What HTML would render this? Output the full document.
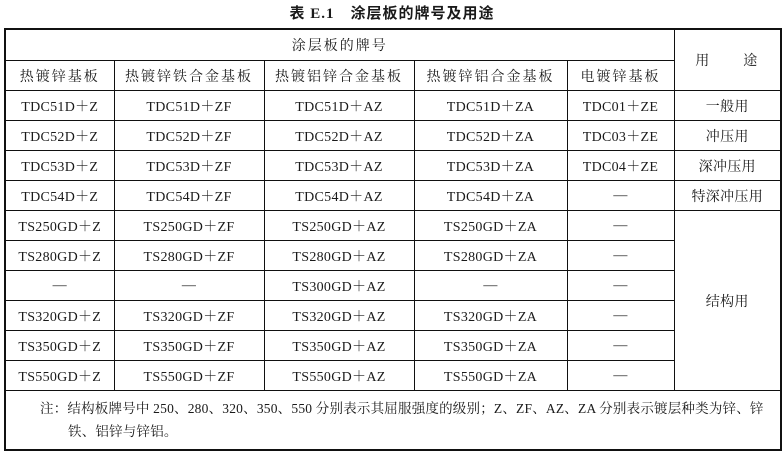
<!DOCTYPE html><html><head><meta charset="utf-8"><style>
body{margin:0;width:784px;height:456px;background:#fff;position:relative;overflow:hidden;font-family:"Liberation Serif","Noto Serif CJK SC",serif;color:#1a1a1a}
.t{position:absolute;top:2px;left:0;width:784px;text-align:center;font:bold 15px "Liberation Serif","Noto Sans CJK SC",sans-serif;letter-spacing:1px}
table{position:absolute;left:4px;top:28px;border-collapse:collapse;table-layout:fixed;width:776px;border:2px solid #111}
td{border:1px solid #111;text-align:center;font-size:14px;padding:0;height:29px;white-space:nowrap;letter-spacing:0.3px}
.h td{letter-spacing:2px}
.n{text-align:left;padding-left:34px;line-height:23px;font-size:13.5px;height:58px;white-space:nowrap;padding-right:4px;letter-spacing:0.2px}
</style></head><body>
<div class="t">表 E.1　涂层板的牌号及用途</div>
<table>
<colgroup><col style="width:109px"><col style="width:150px"><col style="width:150px"><col style="width:153px"><col style="width:107px"><col style="width:107px"></colgroup>
<tr class="h"><td colspan="5" style="height:30px">涂层板的牌号</td><td rowspan="2">用　　途</td></tr>
<tr class="h"><td style="height:28px">热镀锌基板</td><td>热镀锌铁合金基板</td><td>热镀铝锌合金基板</td><td>热镀锌铝合金基板</td><td>电镀锌基板</td></tr>
<tr><td>TDC51D＋Z</td><td>TDC51D＋ZF</td><td>TDC51D＋AZ</td><td>TDC51D＋ZA</td><td>TDC01＋ZE</td><td>一般用</td></tr>
<tr><td>TDC52D＋Z</td><td>TDC52D＋ZF</td><td>TDC52D＋AZ</td><td>TDC52D＋ZA</td><td>TDC03＋ZE</td><td>冲压用</td></tr>
<tr><td>TDC53D＋Z</td><td>TDC53D＋ZF</td><td>TDC53D＋AZ</td><td>TDC53D＋ZA</td><td>TDC04＋ZE</td><td>深冲压用</td></tr>
<tr><td>TDC54D＋Z</td><td>TDC54D＋ZF</td><td>TDC54D＋AZ</td><td>TDC54D＋ZA</td><td>—</td><td>特深冲压用</td></tr>
<tr><td>TS250GD＋Z</td><td>TS250GD＋ZF</td><td>TS250GD＋AZ</td><td>TS250GD＋ZA</td><td>—</td><td rowspan="6">结构用</td></tr>
<tr><td>TS280GD＋Z</td><td>TS280GD＋ZF</td><td>TS280GD＋AZ</td><td>TS280GD＋ZA</td><td>—</td></tr>
<tr><td>—</td><td>—</td><td>TS300GD＋AZ</td><td>—</td><td>—</td></tr>
<tr><td>TS320GD＋Z</td><td>TS320GD＋ZF</td><td>TS320GD＋AZ</td><td>TS320GD＋ZA</td><td>—</td></tr>
<tr><td>TS350GD＋Z</td><td>TS350GD＋ZF</td><td>TS350GD＋AZ</td><td>TS350GD＋ZA</td><td>—</td></tr>
<tr><td>TS550GD＋Z</td><td>TS550GD＋ZF</td><td>TS550GD＋AZ</td><td>TS550GD＋ZA</td><td>—</td></tr>
<tr><td colspan="6" class="n">注：结构板牌号中 250、280、320、350、550 分别表示其屈服强度的级别；Z、ZF、AZ、ZA 分别表示镀层种类为锌、锌<br><span style="padding-left:28px">铁、铝锌与锌铝。</span></td></tr>
</table>
</body></html>
